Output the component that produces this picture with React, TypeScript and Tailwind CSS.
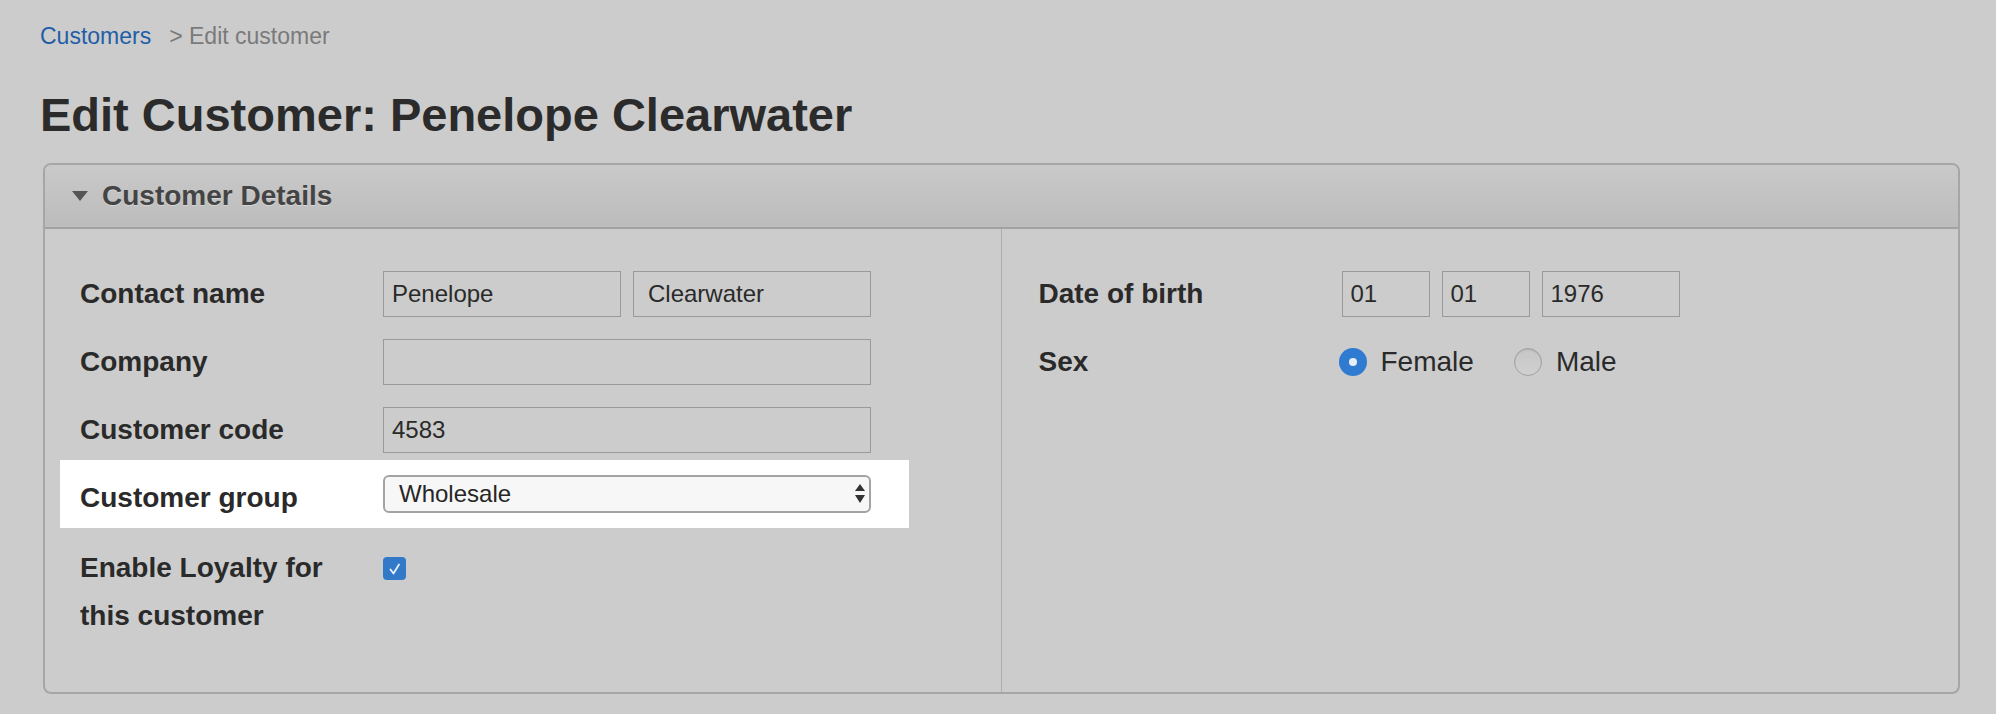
import React from "react";

const font = { fontFamily: '"Liberation Sans", Arial, Helvetica, sans-serif' };

function TextInput({ value, width, pad = "px-[8px]" }: { value: string; width: string; pad?: string }) {
  return (
    <input
      defaultValue={value}
      readOnly
      className={`${width} ${pad} h-[46px] border border-[#9a9a9a] bg-transparent text-[24px] text-[#2a2a2a] outline-none`}
    />
  );
}

function Label({ children, className = "" }: { children: React.ReactNode; className?: string }) {
  return (
    <div className={`w-[303px] shrink-0 text-[28px] leading-[32px] font-bold text-[#2a2a2a] ${className}`}>
      {children}
    </div>
  );
}

function Radio({ checked }: { checked?: boolean }) {
  if (checked) {
    return (
      <span className="flex size-[28px] items-center justify-center rounded-full bg-[#2f7bd1]">
        <span className="size-[8px] rounded-full bg-[#e8eef6]" />
      </span>
    );
  }
  return (
    <span className="size-[28px] rounded-full border border-[#a0a0a0] bg-gradient-to-b from-[#c6c6c6] to-[#d0d0d0] shadow-[inset_0_1px_1px_rgba(0,0,0,0.12)]" />
  );
}

export default function App() {
  return (
    <div style={font} className="min-h-[714px] bg-[#cccccc] pl-[40px] pr-[36px] pt-[23px]">
      {/* Breadcrumb */}
      <div className="flex text-[23px] leading-[26px]">
        <span className="text-[#1f5ea6]">Customers</span>
        <span className="ml-[18px] text-[#7a7a7a]">&gt; Edit customer</span>
      </div>

      <h1 className="mt-[40px] text-[47px] leading-[52px] font-bold text-[#2b2b2b]">
        Edit Customer: Penelope Clearwater
      </h1>

      {/* Panel */}
      <div className="mt-[22px] ml-[3px] overflow-hidden rounded-[8px] border-2 border-[#a6a6a6]">
        <div className="flex h-[64px] items-center border-b-2 border-[#a2a2a2] bg-gradient-to-b from-[#c9c9c9] to-[#bcbcbc] pl-[27px]">
          <svg width="16" height="10" viewBox="0 0 16 10" className="mr-[14px]">
            <polygon points="0,0 16,0 8,10" fill="#555555" />
          </svg>
          <span className="text-[28px] leading-[30px] font-bold text-[#444444] [text-shadow:0_1px_0_rgba(255,255,255,0.35)]">
            Customer Details
          </span>
        </div>

        <div className="grid grid-cols-2">
          {/* Left column */}
          <div className="border-r border-[#adadad] pt-[42px] pb-[52px]">
            <div className="flex h-[46px] items-center pl-[35px]">
              <Label>Contact name</Label>
              <div className="flex gap-[12px]">
                <TextInput value="Penelope" width="w-[238px]" />
                <TextInput value="Clearwater" width="w-[238px]" pad="pl-[14px] pr-[8px]" />
              </div>
            </div>
            <div className="mt-[22px] flex h-[46px] items-center pl-[35px]">
              <Label>Company</Label>
              <TextInput value="" width="w-[488px]" />
            </div>
            <div className="mt-[22px] flex h-[46px] items-center pl-[35px]">
              <Label>Customer code</Label>
              <TextInput value="4583" width="w-[488px]" />
            </div>

            <div className="mt-[7px] ml-[15px] flex h-[68px] w-[849px] items-center bg-white pl-[20px]">
              <Label className="pt-[7px]">Customer group</Label>
              <div className="flex h-[38px] w-[488px] items-center justify-between rounded-[6px] border-2 border-[#a3a3a3] bg-[#f7f7f7] pl-[14px] pr-[4px]">
                <span className="text-[24px] leading-[28px] text-[#262626]">Wholesale</span>
                <svg width="10" height="20" viewBox="0 0 10 20">
                  <polygon points="5,0 10,7 0,7" fill="#333333" />
                  <polygon points="0,11 10,11 5,19" fill="#333333" />
                </svg>
              </div>
            </div>

            <div className="mt-[16px] flex items-start pl-[35px]">
              <Label className="leading-[48px]">
                <span className="block max-w-[260px]">Enable Loyalty for this customer</span>
              </Label>
              <div className="mt-[13px] flex size-[23px] items-center justify-center rounded-[4px] bg-[#3379c9]">
                <svg width="16" height="16" viewBox="0 0 16 16">
                  <path d="M3.5 8.5 L6.5 12.5 L12 3.5" stroke="#e9f0f8" strokeWidth="1.8" fill="none" strokeLinecap="round" strokeLinejoin="round" />
                </svg>
              </div>
            </div>
          </div>

          {/* Right column */}
          <div className="pt-[42px]">
            <div className="flex h-[46px] items-center pl-[37px]">
              <Label>Date of birth</Label>
              <div className="flex gap-[12px]">
                <TextInput value="01" width="w-[88px]" />
                <TextInput value="01" width="w-[88px]" />
                <TextInput value="1976" width="w-[138px]" />
              </div>
            </div>
            <div className="mt-[22px] flex h-[46px] items-center pl-[37px]">
              <Label>Sex</Label>
              <div className="-ml-[3px] flex items-center text-[28px] leading-[32px] text-[#2a2a2a]">
                <Radio checked />
                <span className="ml-[14px]">Female</span>
                <span className="ml-[40px] flex">
                  <Radio />
                </span>
                <span className="ml-[14px]">Male</span>
              </div>
            </div>
          </div>
        </div>
      </div>
    </div>
  );
}
